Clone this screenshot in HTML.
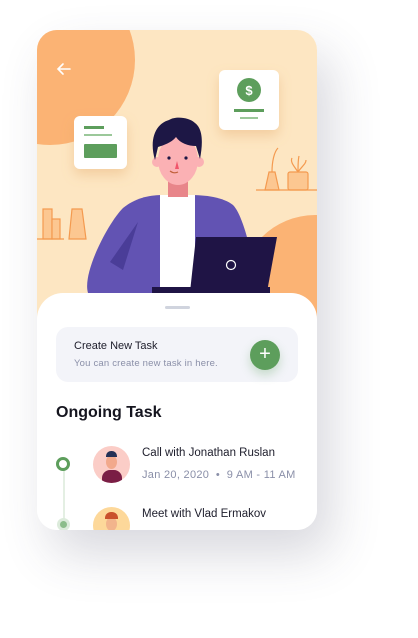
<!DOCTYPE html>
<html><head><style>
body{margin:0;width:418px;height:638px;background:#fff;font-family:"Liberation Sans",sans-serif;position:relative;overflow:hidden}
.card{position:absolute;left:37px;top:30px;width:280px;height:500px;border-radius:20px;overflow:hidden;background:#fff;box-shadow:14px 24px 50px rgba(60,60,90,.2)}
.abs{position:absolute}
</style></head><body>
<div class="card">
<svg class="abs" style="left:0;top:0" width="280" height="300" viewBox="37 30 280 300">
<defs><filter id="sh" x="-50%" y="-50%" width="200%" height="200%"><feDropShadow dx="0" dy="6" stdDeviation="6" flood-color="#e0a060" flood-opacity=".35"/></filter></defs>
<rect x="37" y="30" width="280" height="300" fill="#fde6c2"/>
<circle cx="50" cy="60" r="85" fill="#fbb374"/>
<circle cx="315" cy="290" r="75" fill="#fbb374"/>
<path d="M70 69H58M63 64l-5 5 5 5" stroke="#fff" stroke-width="1.6" fill="none" stroke-linecap="round"/>
<g stroke="#f49a4f" stroke-width="1.2" fill="#fcc791">
<rect x="43" y="209" width="9" height="30"/><rect x="52" y="219" width="8" height="20"/>
<path d="M72 209h10l4 30H69z"/>
<path d="M269 172h6l4 18h-14z"/><rect x="288" y="172" width="20" height="18" rx="2"/>
</g>
<path d="M37 239h27M256 190h62" stroke="#f49a4f" stroke-width="1.2"/>
<path d="M272 172c0-10 2-20 6-24M298 172c-4-6-8-10-6-14M298 172c0-8 0-12 1-16M298 172c4-6 8-8 8-12" stroke="#f49a4f" stroke-width="1.2" fill="none"/>
<rect x="219" y="70" width="60" height="60" rx="6" fill="#fff" filter="url(#sh)"/>
<circle cx="249" cy="90" r="12" fill="#5d9e5c"/>
<text x="249" y="95" font-size="13" font-weight="bold" fill="#fff" text-anchor="middle" font-family="Liberation Sans">$</text>
<rect x="234" y="109" width="30" height="3" fill="#5d9e5c"/><rect x="240" y="117" width="18" height="2" fill="#9bc89a"/>
<rect x="74" y="116" width="53" height="53" rx="6" fill="#fff" filter="url(#sh)"/>
<rect x="84" y="126" width="20" height="3" fill="#5d9e5c"/><rect x="84" y="134" width="28" height="2" fill="#9bc89a"/>
<rect x="84" y="144" width="33" height="14" rx="1" fill="#5d9e5c"/>
<path d="M88 293c-6-20 20-70 35-85 15-12 30-13 42-13h25c15 0 33 2 43 10 10 10 20 50 25 88z" fill="#6253b3"/>
<path d="M110 262l28-40-15 48z" fill="#4a3d98"/>
<rect x="160" y="195" width="35" height="98" fill="#fff"/>
<rect x="168" y="175" width="20" height="22" fill="#e8858a"/>
<ellipse cx="178" cy="160" rx="20" ry="25" fill="#fbb1b4"/>
<circle cx="157" cy="162" r="5" fill="#fbb1b4"/><circle cx="199" cy="162" r="5" fill="#fbb1b4"/>
<path d="M155 160c-6-20 0-36 14-40 6-4 20-3 26 3 8 6 8 20 5 36l-4-13c-8 0-16-3-20-9-5 6-12 8-18 10z" fill="#1d1745"/>
<circle cx="169" cy="158" r="1.6" fill="#1d1745"/><circle cx="186" cy="158" r="1.6" fill="#1d1745"/>
<path d="M177 161l2 8h-4z" fill="#f0556b"/>
<path d="M170 171q4 3 8 1" stroke="#c0603a" stroke-width="1.2" fill="none"/>
<path d="M196 237h81l-10 55h-77z" fill="#1f1445"/>
<rect x="152" y="287" width="118" height="6" fill="#1f1445"/>
<circle cx="231" cy="265" r="4.5" stroke="#fff" stroke-width="1.2" fill="none"/>
</svg>
<div class="abs" style="left:0;top:263px;width:280px;height:260px;background:#fff;border-radius:26px 26px 0 0"></div>
<div class="abs" style="left:128px;top:276px;width:25px;height:3px;background:#d0d4de;border-radius:2px"></div>
<div class="abs" style="left:19px;top:297px;width:242px;height:55px;background:#f3f4f9;border-radius:12px"></div>
<div class="abs" style="left:37px;top:310px;font-size:11px;color:#1d1d2b">Create New Task</div>
<div class="abs" style="left:37px;top:328px;font-size:9.5px;color:#8a8fa8;letter-spacing:.2px">You can create new task in here.</div>
<div class="abs" style="left:213px;top:310px;width:30px;height:30px;border-radius:50%;background:#5d9e5c;color:#fff;font-size:20px;line-height:29px;text-align:center;box-shadow:0 5px 10px rgba(93,158,92,.3)">+</div>
<div class="abs" style="left:19px;top:374px;font-size:16px;font-weight:bold;color:#15151f">Ongoing Task</div>
<div class="abs" style="left:26px;top:440px;width:2px;height:60px;background:#e4efe3"></div>
<div class="abs" style="left:19px;top:427px;width:8px;height:8px;border:3.5px solid #5d9e5c;border-radius:50%;background:#fff"></div>
<div class="abs" style="left:20px;top:488px;width:7px;height:7px;border:3.5px solid #dcebdb;border-radius:50%;background:#8cbd8b"></div>
<div class="abs" style="left:56px;top:416px;width:37px;height:37px;border-radius:50%;background:#fbcdc7;overflow:hidden"><div style="position:absolute;left:9px;top:24px;width:20px;height:16px;border-radius:8px 8px 0 0;background:#7a1e45"></div><div style="position:absolute;left:13px;top:9px;width:11px;height:14px;border-radius:50%;background:#f2a98c"></div><div style="position:absolute;left:13px;top:5px;width:11px;height:6px;border-radius:5px 5px 0 0;background:#243056"></div></div>
<div class="abs" style="left:56px;top:477px;width:37px;height:37px;border-radius:50%;background:#fdd89a;overflow:hidden"><div style="position:absolute;left:7px;top:26px;width:24px;height:14px;border-radius:8px 8px 0 0;background:#3f7fd0"></div><div style="position:absolute;left:13px;top:10px;width:11px;height:14px;border-radius:50%;background:#f2b48c"></div><div style="position:absolute;left:12px;top:5px;width:13px;height:7px;border-radius:6px 6px 0 0;background:#c9502c"></div></div>
<div class="abs" style="left:105px;top:417px;font-size:11.5px;color:#1d1d2b">Call with Jonathan Ruslan</div>
<div class="abs" style="left:105px;top:439px;font-size:11px;color:#8a8fa8;letter-spacing:.3px">Jan 20, 2020 &nbsp;•&nbsp; 9 AM - 11 AM</div>
<div class="abs" style="left:105px;top:478px;font-size:11.5px;color:#1d1d2b">Meet with Vlad Ermakov</div>
</div>
</body></html>
